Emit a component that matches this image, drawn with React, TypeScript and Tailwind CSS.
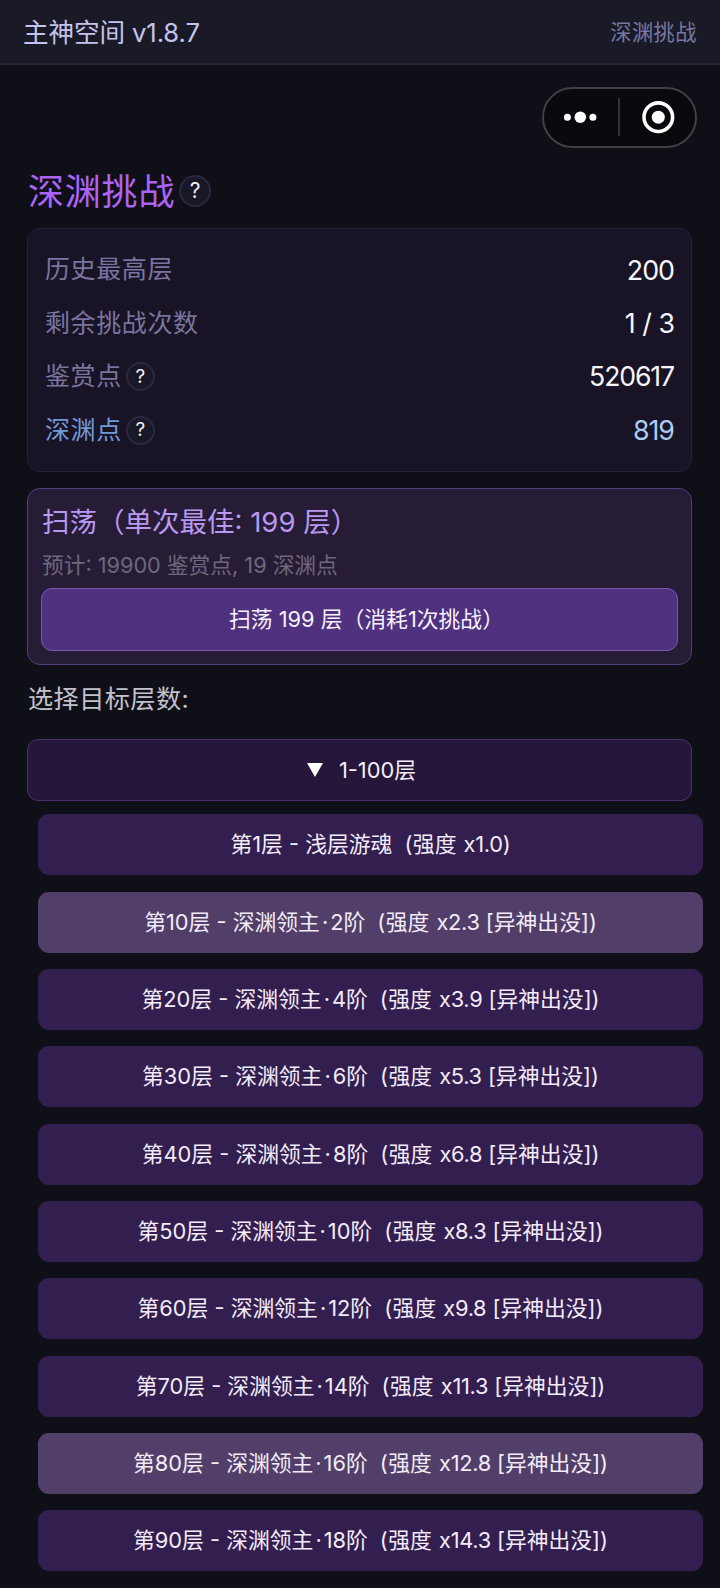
import { useState } from "react";

const FLOORS = [
  { floor: 1, name: "浅层游魂", power: "1.0" },
  { floor: 10, name: "深渊领主", rank: 2, power: "2.3", alien: true, marked: true },
  { floor: 20, name: "深渊领主", rank: 4, power: "3.9", alien: true },
  { floor: 30, name: "深渊领主", rank: 6, power: "5.3", alien: true },
  { floor: 40, name: "深渊领主", rank: 8, power: "6.8", alien: true },
  { floor: 50, name: "深渊领主", rank: 10, power: "8.3", alien: true },
  { floor: 60, name: "深渊领主", rank: 12, power: "9.8", alien: true },
  { floor: 70, name: "深渊领主", rank: 14, power: "11.3", alien: true },
  { floor: 80, name: "深渊领主", rank: 16, power: "12.8", alien: true, marked: true },
  { floor: 90, name: "深渊领主", rank: 18, power: "14.3", alien: true },
];

function Help({ large = false }: { large?: boolean }) {
  return (
    <button
      className={
        "flex shrink-0 items-center justify-center rounded-full border-2 border-[#29293f] bg-[#181826] tracking-normal text-[#f1f1f5] " +
        (large ? "size-8 text-[21px]" : "size-[29px] text-[19px]")
      }
    >
      ?
    </button>
  );
}

// closing bracket set at half width so centred labels stay centred
function Close() {
  return <span className="[font-feature-settings:'halt']">）</span>;
}

function Capsule() {
  return (
    <div className="flex h-[61px] w-[155px] items-center rounded-full border-2 border-[#404045] bg-[#09090e]">
      <svg width="151" height="57" viewBox="0 0 151 57" fill="none">
        <circle cx="23.4" cy="28.2" r="3.5" fill="#fff" />
        <circle cx="36.3" cy="28.2" r="5.8" fill="#fff" />
        <circle cx="48.9" cy="28.2" r="3.5" fill="#fff" />
        <path d="M75 9v38" stroke="#3a3a3e" strokeWidth="1.7" />
        <circle cx="114.3" cy="28.2" r="14.3" stroke="#fff" strokeWidth="3.6" />
        <circle cx="114.3" cy="28.2" r="6.5" fill="#fff" />
      </svg>
    </div>
  );
}

export default function App() {
  const [open, setOpen] = useState(true);

  return (
    <main className="h-[1588px] w-[720px] overflow-hidden bg-[#0f0f17] font-['Inter','Noto_Sans_CJK_SC',sans-serif] whitespace-nowrap">
      <header className="flex h-[65px] items-center justify-between border-b-2 border-[#262536] bg-[#1a1a26] px-[23px] pt-[3px]">
        <h1 className="text-[25.6px] tracking-[-0.1px] text-[#c4c3ee]">主神空间 v1.8.7</h1>
        <span className="text-[21.2px] tracking-[0.5px] text-[#7877a3]">深渊挑战</span>
      </header>

      <div className="mt-[22px] flex justify-end pr-[23px]">
        <Capsule />
      </div>

      <div className="mt-[20px] flex h-[46px] items-center gap-1 pl-[28px]">
        <h2 className="pt-0.5 text-[36px] leading-none tracking-[0.8px] text-[#ab64f5]">深渊挑战</h2>
        <Help large />
      </div>

      <section className="mt-[14px] ml-[27px] flex h-[244px] w-[665px] flex-col rounded-[13px] border border-[#25213a] bg-[#191326] px-[17px] pt-[14px] text-[25px] tracking-[0.6px] text-[#7a759f]">
        <div className="flex h-[53.6px] items-center justify-between">
          <span>历史最高层</span>
          <span className="text-[26.8px] tracking-[-1px] text-[#f7f5fb]">200</span>
        </div>
        <div className="flex h-[53.6px] items-center justify-between">
          <span>剩余挑战次数</span>
          <span className="text-[26.8px] tracking-[-1px] text-[#f7f5fb] [word-spacing:1px]">1 / 3</span>
        </div>
        <div className="flex h-[53.6px] items-center justify-between">
          <span className="flex items-center gap-1">
            鉴赏点
            <Help />
          </span>
          <span className="text-[26.6px] tracking-[-1.1px] text-[#f7f5fb]">520617</span>
        </div>
        <div className="flex h-[53.6px] items-center justify-between">
          <span className="flex items-center gap-1 text-[#7299d6]">
            深渊点
            <Help />
          </span>
          <span className="text-[26.8px] tracking-[-1px] text-[#aacdf5]">819</span>
        </div>
      </section>

      <section className="mt-4 ml-[27px] h-[177px] w-[665px] rounded-[13px] border border-[#543f7a] bg-[#261c36] px-[13px] pt-[13px]">
        <h3 className="h-10 pl-px text-[27.5px] leading-10 text-[#b899ef]">
          扫荡（单次最佳: 199 层<Close />
        </h3>
        <p className="mt-1 h-[38px] pl-px text-[21.7px] leading-[38px] text-[#6f677d]">
          预计: 19900 鉴赏点, 19 深渊点
        </p>
        <button className="mt-[4px] block h-[63px] w-full rounded-[11px] border border-[#7c55b3] bg-[#503180] pl-[3px] text-[21.8px] text-[#f7f2fc]">
          扫荡 199 层（消耗1次挑战
          <Close />
        </button>
      </section>

      <p className="mt-[14px] ml-[28px] h-10 text-[25.2px] leading-10 tracking-[0.4px] text-[#c2c2cc]">
        选择目标层数:
      </p>

      <button
        onClick={() => setOpen(!open)}
        className="mt-5 ml-[27px] flex h-[62px] w-[665px] items-center justify-center gap-4 rounded-[11px] border border-[#4b3070] bg-[#26163a] pl-1 text-[21.8px] text-[#f5effa]"
      >
        <svg width="16" height="14" viewBox="0 0 16 14" fill="#fff" className={open ? "" : "-rotate-90"}>
          <path d="M0 0h16L8 14z" />
        </svg>
        1-100层
      </button>

      {open && (
        <ul className="mt-[13.2px] ml-[38px] flex w-[665px] flex-col gap-[16.35px]">
          {FLOORS.map((f) => (
            <li key={f.floor}>
              <button
                className={
                  "block h-[61px] w-full rounded-[11px] text-[21.8px] text-[#f3ecf8] " +
                  (f.marked ? "bg-[#513f69]" : "bg-[#331e50]")
                }
              >
                第{f.floor}层 <span className="[font-feature-settings:'case']">-</span> {f.name}
                {f.rank && (
                  <>
                    <span className="mx-[2px]">·</span>
                    {f.rank}阶
                  </>
                )}
                <span className="mr-px ml-[12px] tracking-[-0.5px]">(</span>强度{" "}
                <span className="ml-px tracking-[-0.3px]">x{f.power}</span>
                {f.alien && " [异神出没]"})
              </button>
            </li>
          ))}
        </ul>
      )}
    </main>
  );
}
